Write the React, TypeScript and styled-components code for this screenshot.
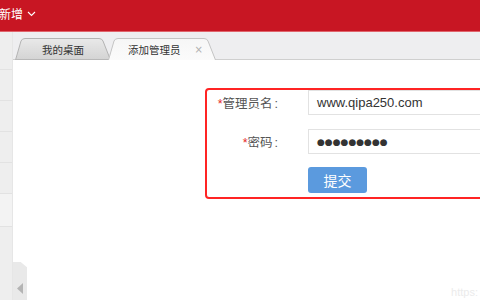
import React from "react";
import styled, { createGlobalStyle } from "styled-components";

const Global = createGlobalStyle`
  html, body { margin: 0; padding: 0; background: #fff; }
  body { font-family: "Liberation Sans", "Noto Sans CJK SC", sans-serif; }
  * { box-sizing: border-box; }
`;

const Page = styled.div`
  position: relative;
  width: 480px;
  height: 300px;
  overflow: hidden;
  display: flex;
  flex-direction: column;
`;

const Header = styled.div`
  height: 32px;
  flex: none;
  background: #c81623;
  border-bottom: 1px solid #e0646c;
  display: flex;
  align-items: center;
  color: #fff;
  font-size: 12px;
  padding-bottom: 4px;
`;

const HeaderTitle = styled.span`
  margin-left: -1px;
  display: flex;
  align-items: center;
  gap: 4px;
`;

const Body = styled.div`
  flex: 1;
  display: flex;
  min-height: 0;
`;

const Sidebar = styled.div`
  width: 13px;
  flex: none;
  background: #eeeeee;
  border-right: 1px solid #e6e6e6;
  display: flex;
  flex-direction: column;
`;

const SideItem = styled.div<{ $h: number; $light?: boolean }>`
  height: ${(p) => p.$h}px;
  flex: none;
  border-bottom: 1px solid #e2e2e2;
  background: ${(p) => (p.$light ? "#f3f3f3" : "transparent")};
`;

const Main = styled.div`
  flex: 1;
  display: flex;
  flex-direction: column;
  min-width: 0;
`;

const TabBar = styled.div`
  height: 28px;
  flex: none;
  background: #eeeef0;
  border-bottom: 1px solid #cfcfcf;
  display: flex;
  align-items: flex-end;
  padding-left: 2px;
`;

const TabWrap = styled.div<{ $w: number; $active?: boolean }>`
  position: relative;
  flex: none;
  width: ${(p) => p.$w}px;
  height: 22px;
  margin-bottom: -1px;
  margin-right: -3px;
  display: flex;
  align-items: center;
  justify-content: ${(p) => (p.$active ? "flex-start" : "center")};
  gap: 14px;
  font-size: 10.5px;
  color: #333;
  z-index: ${(p) => (p.$active ? 2 : 1)};
  padding-left: ${(p) => (p.$active ? 20 : 0)}px;
`;

const TabShape = styled.svg`
  position: absolute;
  inset: 0;
  z-index: -1;
`;

const TabLabel = styled.span`
  position: relative;
`;

const TabClose = styled.span`
  position: relative;
  color: #b0b0b0;
  font-size: 10px;
  font-family: "DejaVu Sans", sans-serif;
`;

const Content = styled.div`
  flex: 1;
  background: #fff;
  padding: 28px 0 0 192px;
  position: relative;
`;

const FormBox = styled.div`
  width: 320px;
  flex: none;
  border: 2px solid #ff2424;
  border-radius: 4px;
  padding: 0 0 4px 0;
  display: flex;
  flex-direction: column;
  gap: 14px;
`;

const Row = styled.div`
  display: flex;
  align-items: center;
  height: 25px;
`;

const Label = styled.div`
  flex: none;
  width: 71px;
  text-align: right;
  font-size: 12.5px;
  color: #555;
  margin-right: 30px;
  white-space: nowrap;
`;

const Star = styled.span`
  color: #e62a2a;
`;

const Colon = styled.span`
  margin-left: 2px;
`;

const Field = styled.div<{ $dots?: boolean }>`
  flex: none;
  width: 230px;
  height: 25px;
  border: 1px solid #e2e2e2;
  padding-left: 8px;
  display: flex;
  align-items: center;
  color: #333;
  font-size: ${(p) => (p.$dots ? "9px" : "13px")};
  letter-spacing: 0;
  font-family: ${(p) =>
    p.$dots ? '"DejaVu Sans", sans-serif' : '"Liberation Sans", "Noto Sans CJK SC", sans-serif'};
`;

const SubmitRow = styled.div`
  display: flex;
  padding-left: 101px;
  margin-top: -1px;
`;

const Button = styled.button`
  width: 59px;
  height: 26px;
  border: none;
  border-radius: 3px;
  background: #5b9ade;
  color: #fff;
  font-size: 14px;
  font-family: "Liberation Sans", "Noto Sans CJK SC", sans-serif;
  padding: 0;
`;

const Flap = styled.div`
  position: absolute;
  left: 0;
  bottom: 0;
  width: 14px;
  height: 38px;
  background: #e9e9e9;
  clip-path: polygon(0 0, 55% 0, 100% 14%, 100% 100%, 0 100%);
  display: flex;
  align-items: flex-end;
  justify-content: center;
  padding-bottom: 6px;
`;

const Watermark = styled.div`
  position: absolute;
  right: 2px;
  bottom: 2px;
  font-size: 11px;
  color: #ebebeb;
  font-family: "Liberation Sans", sans-serif;
`;

function tabPath(w: number) {
  const h = 22;
  return `M0.5 ${h} L6 3 Q7 0.5 10 0.5 L${w - 12} 0.5 Q${w - 9} 0.5 ${w - 8} 3 L${w - 0.5} ${h}`;
}

const Tab: React.FC<{ w: number; active?: boolean; children: React.ReactNode }> = ({
  w,
  active,
  children,
}) => {
  const id = active ? "tabA" : "tabB";
  return (
    <TabWrap $w={w} $active={active}>
      <TabShape width={w} height={22} viewBox={`0 0 ${w} 22`}>
        <defs>
          <linearGradient id={id} x1="0" y1="0" x2="0" y2="1">
            {active ? (
              <>
                <stop offset="0" stopColor="#f6f6f6" />
                <stop offset="1" stopColor="#fbfbfb" />
              </>
            ) : (
              <>
                <stop offset="0" stopColor="#e9e9e9" />
                <stop offset="1" stopColor="#d3d3d3" />
              </>
            )}
          </linearGradient>
        </defs>
        <path d={tabPath(w)} fill={`url(#${id})`} stroke={active ? "#c4c4c4" : "#b3b3b3"} strokeWidth="1" />
        {!active && <line x1="0" y1="21.5" x2={w} y2="21.5" stroke="#b8b8b8" />}
      </TabShape>
      {children}
    </TabWrap>
  );
};

export default function App() {
  return (
    <>
      <Global />
      <Page>
        <Header>
          <HeaderTitle>
            新增
            <svg width="9" height="6" viewBox="0 0 9 6">
              <polyline points="1,1 4.5,4.5 8,1" fill="none" stroke="#fff" strokeWidth="1.1" />
            </svg>
          </HeaderTitle>
        </Header>
        <Body>
          <Sidebar>
            <SideItem $h={38} />
            <SideItem $h={31} />
            <SideItem $h={31} />
            <SideItem $h={31} />
            <SideItem $h={31} />
            <SideItem $h={33} $light />
          </Sidebar>
          <Main>
            <TabBar>
              <Tab w={96}>
                <TabLabel>我的桌面</TabLabel>
              </Tab>
              <Tab w={108} active>
                <TabLabel>添加管理员</TabLabel>
                <TabClose>×</TabClose>
              </Tab>
            </TabBar>
            <Content>
              <FormBox>
                <Row>
                  <Label>
                    <Star>*</Star>管理员名<Colon>:</Colon>
                  </Label>
                  <Field>www.qipa250.com</Field>
                </Row>
                <Row>
                  <Label>
                    <Star>*</Star>密码<Colon>:</Colon>
                  </Label>
                  <Field $dots>●●●●●●●●●</Field>
                </Row>
                <SubmitRow>
                  <Button>提交</Button>
                </SubmitRow>
              </FormBox>
              <Flap>
                <svg width="6" height="11" viewBox="0 0 6 11">
                  <polygon points="6,0 0,5.5 6,11" fill="#b4b4b4" />
                </svg>
              </Flap>
            </Content>
          </Main>
        </Body>
        <Watermark>https:</Watermark>
      </Page>
    </>
  );
}
